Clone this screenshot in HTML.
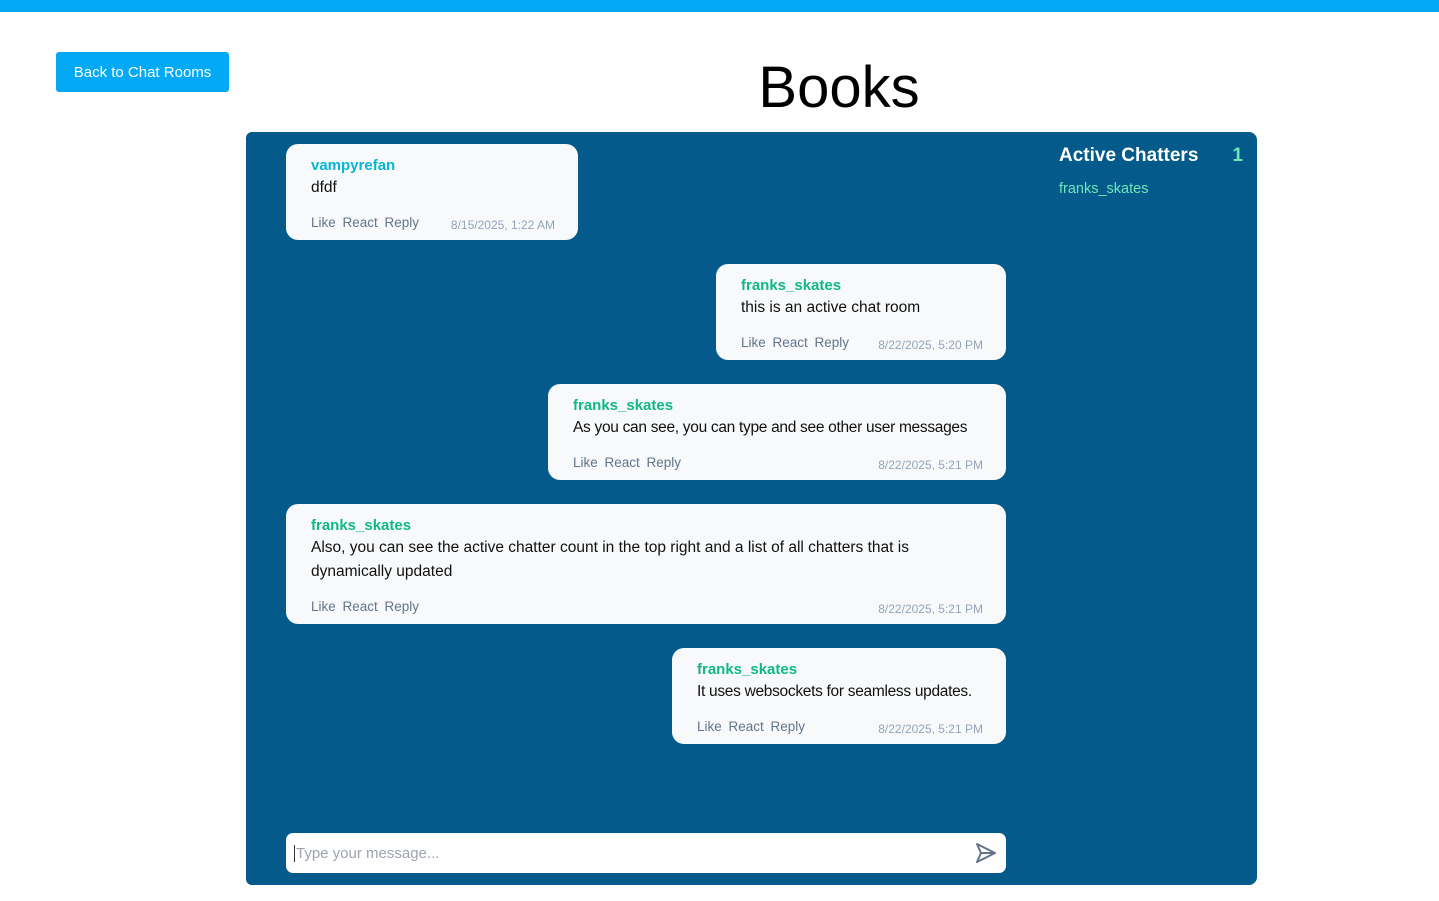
<!DOCTYPE html>
<html><head><style>
body{margin:0;width:1439px;height:901px;background:#fff;font-family:"Liberation Sans",sans-serif;position:relative;overflow:hidden}
.top{position:absolute;left:0;top:0;width:1439px;height:12px;background:#03a9f4}
.back{position:absolute;left:56px;top:52px;width:173px;height:40px;background:#03a9f4;color:#fff;border-radius:3px;font-size:15px;line-height:42px;text-align:center}
h1{position:absolute;left:0;width:1678px;text-align:center;top:54px;margin:0;font-weight:400;font-size:58px;line-height:68px;color:#000}
.main{position:absolute;left:246px;top:132px;width:800px;height:753px;background:#035a8b;border-radius:6px 0 0 6px}
.side{position:absolute;left:1046px;top:132px;width:211px;height:753px;background:#035a8b;border-radius:0 8px 8px 0}
.side .t{position:absolute;left:13px;top:13px;color:#fff;font-weight:700;font-size:19px}
.side .n{position:absolute;right:14px;top:13px;color:#6ee7b7;font-weight:700;font-size:19px}
.side .u{position:absolute;left:13px;top:49px;color:#6ee7b7;font-size:14.5px}
.b{position:absolute;background:#f7f9fb;border-radius:12px;box-sizing:border-box;padding:13px 22px 0 25px;white-space:nowrap}
.nm{font-weight:700;font-size:15px;color:#10b981;line-height:18px}
.nm.c{color:#06b6d4}
.tx{font-size:15.5px;line-height:24px;color:#111;margin-top:1px}
.tx.w{white-space:normal}
.ac{position:absolute;left:25px;bottom:10px;font-size:13.5px;color:#64748b;word-spacing:3px}
.ts{position:absolute;right:23px;bottom:8px;font-size:12px;color:#94a3b8}
.in{position:absolute;left:286px;top:833px;width:720px;height:40px;background:#fff;border-radius:7px}
.in span{position:absolute;left:8px;top:12px;font-size:15px;color:#9ca3af;border-left:1px solid #333;padding-left:1px}
</style></head><body>
<div class="top"></div>
<div class="back">Back to Chat Rooms</div>
<h1>Books</h1>
<div class="main"></div>
<div class="side"><div class="t">Active Chatters</div><div class="n">1</div><div class="u">franks_skates</div></div>
<div class="b" style="left:286px;top:144px;width:292px;height:96px"><div class="nm c">vampyrefan</div><div class="tx">dfdf</div><div class="ac">Like React Reply</div><div class="ts">8/15/2025, 1:22 AM</div></div>
<div class="b" style="left:716px;top:264px;width:290px;height:96px"><div class="nm">franks_skates</div><div class="tx">this is an active chat room</div><div class="ac">Like React Reply</div><div class="ts">8/22/2025, 5:20 PM</div></div>
<div class="b" style="left:548px;top:384px;width:458px;height:96px"><div class="nm">franks_skates</div><div class="tx" style="letter-spacing:-0.3px">As you can see, you can type and see other user messages</div><div class="ac">Like React Reply</div><div class="ts">8/22/2025, 5:21 PM</div></div>
<div class="b" style="left:286px;top:504px;width:720px;height:120px"><div class="nm">franks_skates</div><div class="tx w" style="width:640px">Also, you can see the active chatter count in the top right and a list of all chatters that is dynamically updated</div><div class="ac">Like React Reply</div><div class="ts">8/22/2025, 5:21 PM</div></div>
<div class="b" style="left:672px;top:648px;width:334px;height:96px"><div class="nm">franks_skates</div><div class="tx" style="letter-spacing:-0.3px">It uses websockets for seamless updates.</div><div class="ac">Like React Reply</div><div class="ts">8/22/2025, 5:21 PM</div></div>
<div class="in"><span>Type your message...</span>
<svg style="position:absolute;left:688px;top:9px" width="24" height="22" viewBox="0 0 24 22"><path d="M3 2 L21 11 L3 20 L7 11 Z M7 11 H21" fill="none" stroke="#64748b" stroke-width="2" stroke-linejoin="round"/></svg></div>
</body></html>
